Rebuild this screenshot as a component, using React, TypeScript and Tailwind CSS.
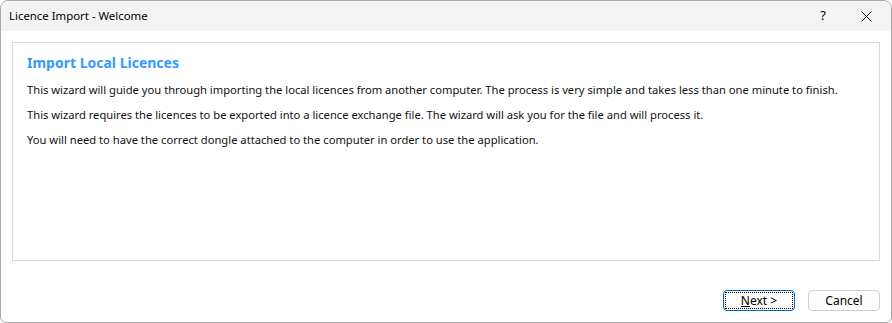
export default function App() {
  return (
    <div className="w-[892px] h-[323px] bg-white font-['Noto_Sans',sans-serif] text-[#1a1a1a] overflow-hidden">
      <div className="flex h-full flex-col rounded-t-[8px] rounded-b-[6px] border border-[#a9a9a9] bg-white">
        {/* title bar */}
        <div className="flex h-[30px] shrink-0 items-center rounded-t-[8px] bg-[#f3f3f3] pl-[8px]">
          <span className="text-[11.4px] text-black">Licence Import - Welcome</span>
          <div className="ml-auto flex h-full items-center pr-[2px]">
            <span className="w-[40px] text-center text-[13px] text-black">?</span>
            <span className="flex w-[46px] items-center justify-center">
              <svg width="11" height="11" viewBox="0 0 11 11" stroke="#1a1a1a" strokeWidth="1">
                <path d="M0.5 0.5 L10.5 10.5 M10.5 0.5 L0.5 10.5" />
              </svg>
            </span>
          </div>
        </div>

        {/* body */}
        <div className="flex flex-1 flex-col px-[11px] pt-[11px]">
          <div className="h-[219px] border border-[#d9d9d9] px-[14px] pt-[9px]">
            <h1 className="text-[14px] font-bold text-[#3399ff]">Import Local Licences</h1>
            <div className="mt-[8px] flex flex-col gap-[7px] whitespace-nowrap text-[11.2px] leading-[18px] text-[#111]">
              <p>
                This wizard will guide you through importing the local licences from another computer. The process is very
                simple and takes less than one minute to finish.
              </p>
              <p>
                This wizard requires the licences to be exported into a licence exchange file. The wizard will ask you for the
                file and will process it.
              </p>
              <p>You will need to have the correct dongle attached to the computer in order to use the application.</p>
            </div>
          </div>

          <div className="mt-auto mb-[11px] flex justify-end gap-[13px]">
            <button className="flex h-[21px] w-[72px] items-center justify-center rounded-[4px] border border-[#0067c0] bg-[#fdfdfd] p-[1px]">
              <span className="flex h-full w-full items-center justify-center border border-dotted border-black text-[12px] text-black">
                <span><span className="underline">N</span>ext &gt;</span>
              </span>
            </button>
            <button className="flex h-[21px] w-[72px] items-center justify-center rounded-[4px] border border-[#d0d0d0] bg-[#fdfdfd] text-[12px] text-black">
              Cancel
            </button>
          </div>
        </div>
      </div>
    </div>
  );
}
